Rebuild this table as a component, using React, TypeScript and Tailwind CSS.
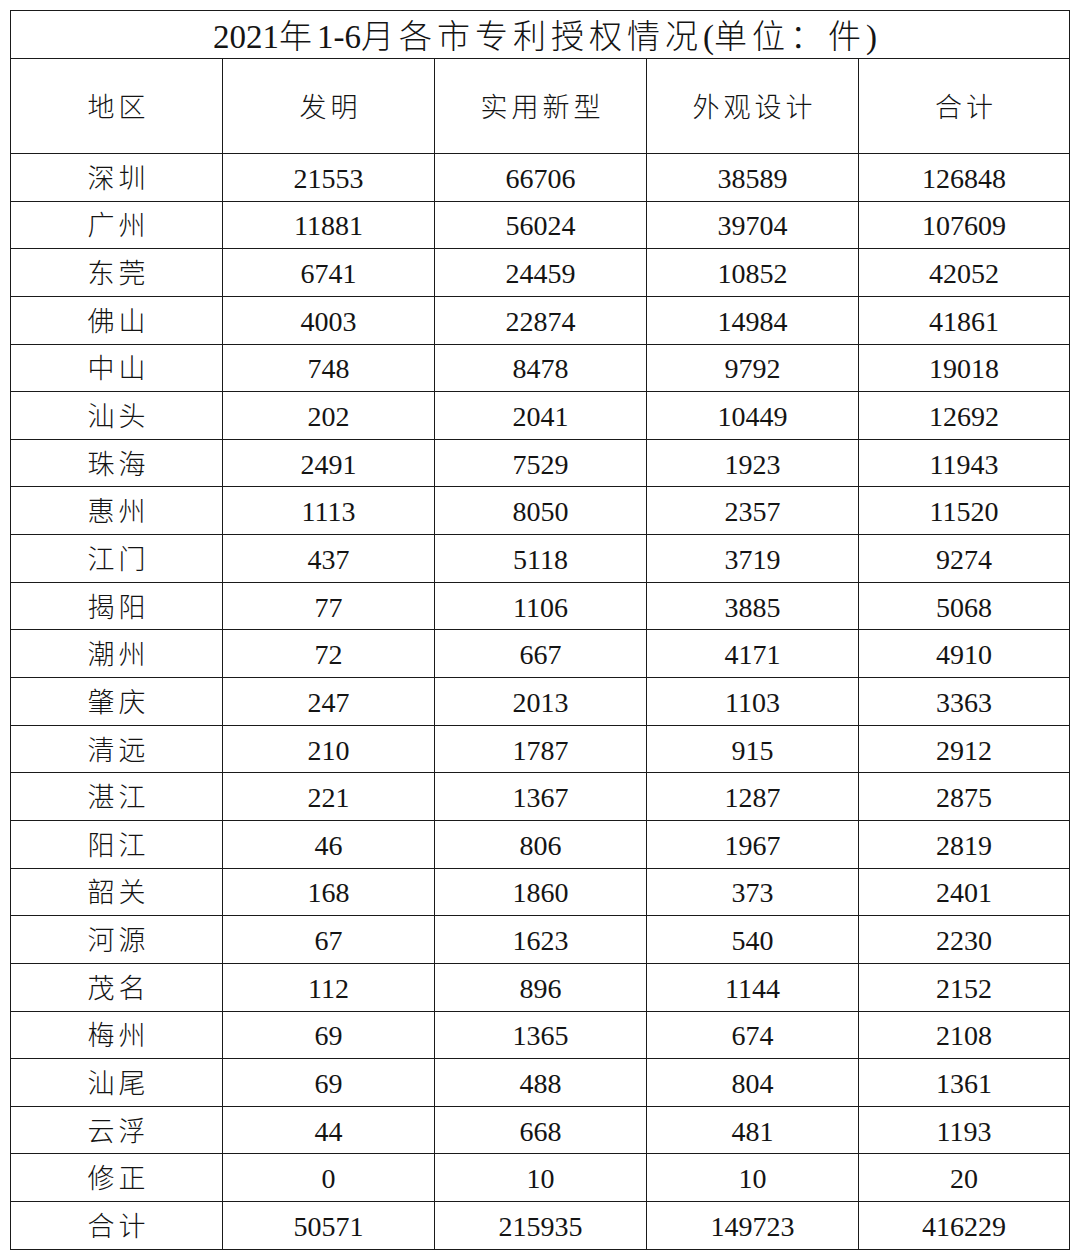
const rows: [string, number, number, number, number][] = [
  ["深圳", 21553, 66706, 38589, 126848],
  ["广州", 11881, 56024, 39704, 107609],
  ["东莞", 6741, 24459, 10852, 42052],
  ["佛山", 4003, 22874, 14984, 41861],
  ["中山", 748, 8478, 9792, 19018],
  ["汕头", 202, 2041, 10449, 12692],
  ["珠海", 2491, 7529, 1923, 11943],
  ["惠州", 1113, 8050, 2357, 11520],
  ["江门", 437, 5118, 3719, 9274],
  ["揭阳", 77, 1106, 3885, 5068],
  ["潮州", 72, 667, 4171, 4910],
  ["肇庆", 247, 2013, 1103, 3363],
  ["清远", 210, 1787, 915, 2912],
  ["湛江", 221, 1367, 1287, 2875],
  ["阳江", 46, 806, 1967, 2819],
  ["韶关", 168, 1860, 373, 2401],
  ["河源", 67, 1623, 540, 2230],
  ["茂名", 112, 896, 1144, 2152],
  ["梅州", 69, 1365, 674, 2108],
  ["汕尾", 69, 488, 804, 1361],
  ["云浮", 44, 668, 481, 1193],
  ["修正", 0, 10, 10, 20],
  ["合计", 50571, 215935, 149723, 416229],
];

const headers = ["地区", "发明", "实用新型", "外观设计", "合计"];

const cell = "border-[1.5px] border-[#1a1a1a] text-center align-middle p-0";
const latin = "font-['Liberation_Serif',serif]";
const cjk = "font-['Noto_Sans_CJK_SC',sans-serif] font-light tracking-[5px]";

export default function App() {
  return (
    <div
      className="w-[1080px] h-[1260px] bg-white pt-[10px] pl-[10px] text-[#141414]"
      style={{ fontFamily: '"Liberation Serif", "Noto Sans CJK SC", serif' }}
    >
      <table className="table-fixed border-collapse w-[1059px]">
        <colgroup>
          <col className="w-[212px]" />
          <col className="w-[212px]" />
          <col className="w-[212px]" />
          <col className="w-[212px]" />
          <col className="w-[211px]" />
        </colgroup>
        <thead>
          <tr className="h-[48px]">
            <th colSpan={5} className={`${cell} font-normal text-[33px] leading-none pt-[3px] pl-[10px]`}>
              <span className={latin}>2021</span>
              <span className={cjk}>年</span>
              <span className={latin}>1-6</span>
              <span className={cjk}>月各市专利授权情况</span>
              <span className={latin}>(</span>
              <span className={cjk}>单位：件</span>
              <span className={latin}>)</span>
            </th>
          </tr>
          <tr className="h-[95px]">
            {headers.map((h) => (
              <th key={h} className={`${cell} font-light text-[27px] tracking-[4px] leading-none pt-[5px]`}>
                <span className="pl-[4px]">{h}</span>
              </th>
            ))}
          </tr>
        </thead>
        <tbody>
          {rows.map(([city, a, b, c, total]) => (
            <tr key={city} className="h-[47.65px]">
              <td className={`${cell} font-light text-[27px] tracking-[4px] leading-none pt-[4px]`}>
                <span className="pl-[4px]">{city}</span>
              </td>
              {[a, b, c, total].map((n, i) => (
                <td key={i} className={`${cell} text-[28px] leading-none pt-[3px]`}>
                  {n}
                </td>
              ))}
            </tr>
          ))}
        </tbody>
      </table>
    </div>
  );
}
